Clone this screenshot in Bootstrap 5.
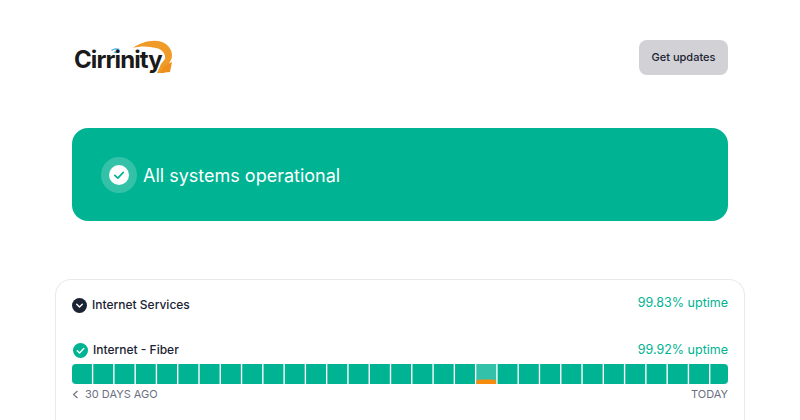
<!DOCTYPE html>
<html lang="en">
<head>
  <meta charset="UTF-8" />
  <meta name="viewport" content="width=device-width, initial-scale=1.0"/>
  <title>Cirrinity Status</title>
  <link href="https://cdn.jsdelivr.net/npm/bootstrap@5.3.0/dist/css/bootstrap.min.css" rel="stylesheet"/>
  <style>
    body { font-family: Inter, "Liberation Sans", sans-serif; color: #1c2333; background: #fff; }
    .page-wrap { width: 690px; margin-left: 55px; }
    .top-row { padding: 40px 17px 0; height: 128px; }
    .logo-box { position: relative; width: 102px; height: 40px; }
    .logo-word { position: absolute; left: 2px; top: 3px; font-size: 24px; font-weight: 700; letter-spacing: -0.9px; color: #1a1a1a; line-height: 34px; }
    .logo-art { position: absolute; left: 0; top: 0; }
    .btn-updates { background: #d1d1d6; border: 0; border-radius: 8px; color: #1c2333; font-size: 11px; font-weight: 500; width: 89px; height: 35px; padding: 0; }
    .hero { background: #00b393; color: #fff; border-radius: 16px; height: 93px; margin: 0 17px; padding-left: 29px; }
    .hero-ring { width: 36px; height: 36px; border-radius: 50%; background: rgba(255,255,255,.2); }
    .hero-title { font-size: 18px; font-weight: 400; margin: 1px 0 0 6px; }
    .svc-card { margin-top: 58px; border: 1px solid #e8e9ed; border-bottom: 0; border-radius: 16px 16px 0 0; padding: 16px 16px 0; height: 141px; }
    .svc-name { font-size: 12px; font-weight: 450; gap: 5px; }
    .uptime { color: #00b393; font-size: 12.5px; font-weight: 400; }
    .uptime-top { margin-top: -2px; }
    .fiber-row { margin-top: 27px; }
    .fiber-icon { margin-left: 1px; }
    .bar-chart { display: block; margin-top: 4px; }
    .range-row { color: #6b7080; font-size: 11px; margin-top: 2px; }
    .range-arrow { margin-right: 6px; }
  </style>
</head>
<body>
  <div class="page-wrap">
    <div class="top-row d-flex justify-content-between align-items-start">
      <div class="logo-box">
        <svg class="logo-art" width="102" height="40" viewBox="0 0 102 40">
          <path d="M61 8C69 2 81 -1 90 2C98 5 102 13 99 20L92 33L85 33L89 24L93 19C94 14 90 9 84 8C76 6 68 6 61 8Z" fill="#f09a28"/>
          <path d="M92 26L100 22L98 32L88 33Z" fill="#ee8f1c"/>
          <path d="M39 10C42 8 45 8 48 9L46 10.500C44 9.500 42 9.500 40 11ZM41 12C43 11 45 11 46 12L44 13.500Z" fill="#5cb8e4"/>
        </svg>
        <span class="logo-word">Cirrinity</span>
      </div>
      <button type="button" class="btn btn-updates">Get updates</button>
    </div>

    <div class="hero d-flex align-items-center">
      <div class="hero-ring d-flex align-items-center justify-content-center">
        <svg width="20" height="20" viewBox="0 0 20 20"><circle cx="10" cy="10" r="10" fill="#fff"/><path d="M5.8 10.3L8.8 13.2L14.3 7.4" fill="none" stroke="#00b393" stroke-width="1.7" stroke-linecap="round" stroke-linejoin="round"/></svg>
      </div>
      <div class="hero-title">All systems operational</div>
    </div>

    <div class="svc-card">
      <div class="d-flex justify-content-between align-items-start">
        <div class="d-flex align-items-center svc-name">
          <svg width="15" height="15" viewBox="0 0 15 15"><circle cx="7.5" cy="7.5" r="7.5" fill="#1c2333"/><path d="M4.7 6.3L7.5 9L10.3 6.3" fill="none" stroke="#fff" stroke-width="1.4" stroke-linecap="round" stroke-linejoin="round"/></svg>
          Internet Services
        </div>
        <div class="uptime uptime-top">99.83% uptime</div>
      </div>

      <div class="fiber-row d-flex justify-content-between align-items-center">
        <div class="d-flex align-items-center svc-name">
          <svg width="15" height="15" viewBox="0 0 15 15" class="fiber-icon"><circle cx="7.5" cy="7.5" r="7.5" fill="#00b393"/><path d="M4.3 7.7L6.6 9.900L10.800 5.600" fill="none" stroke="#fff" stroke-width="1.4" stroke-linecap="round" stroke-linejoin="round"/></svg>
          Internet - Fiber
        </div>
        <div class="uptime">99.92% uptime</div>
      </div>

      <svg class="bar-chart" id="barras" width="656" height="20" viewBox="0 0 656 20">
        <defs><clipPath id="barClip"><rect width="656" height="20" rx="4"/></clipPath></defs>
        <g clip-path="url(#barClip)" id="dias"></g>
      </svg>

      <div class="range-row d-flex justify-content-between align-items-center">
        <div class="d-flex align-items-center">
          <svg width="7" height="9" viewBox="0 0 7 9" class="range-arrow"><path d="M5.5 1L1.5 4.5L5.5 8" fill="none" stroke="#6b7080" stroke-width="1.1"/></svg>
          30 DAYS AGO
        </div>
        <div>TODAY</div>
      </div>
    </div>
  </div>

  <script src="https://cdn.jsdelivr.net/npm/bootstrap@5.3.0/dist/js/bootstrap.bundle.min.js"></script>
  <script>
    // the last bar is cut off by the clip, same as the reference
    const dias = document.getElementById('dias')
    const paso = 21.28
    const ancho = 19.9
    let html = ''
    for (let i = 0; i < 31; i++) {
      const x = paso * i
      const color = i === 19 ? '#33c2a9' : '#00b393'
      html += `<rect x="${x}" y="0" width="${ancho}" height="20" fill="${color}"/>`
      if (i === 19) {
        html += `<rect x="${x}" y="15.500" width="${ancho}" height="6" rx="3" fill="#f78b0f"/>`
      }
    }
    dias.innerHTML = html
  </script>
</body>
</html>
